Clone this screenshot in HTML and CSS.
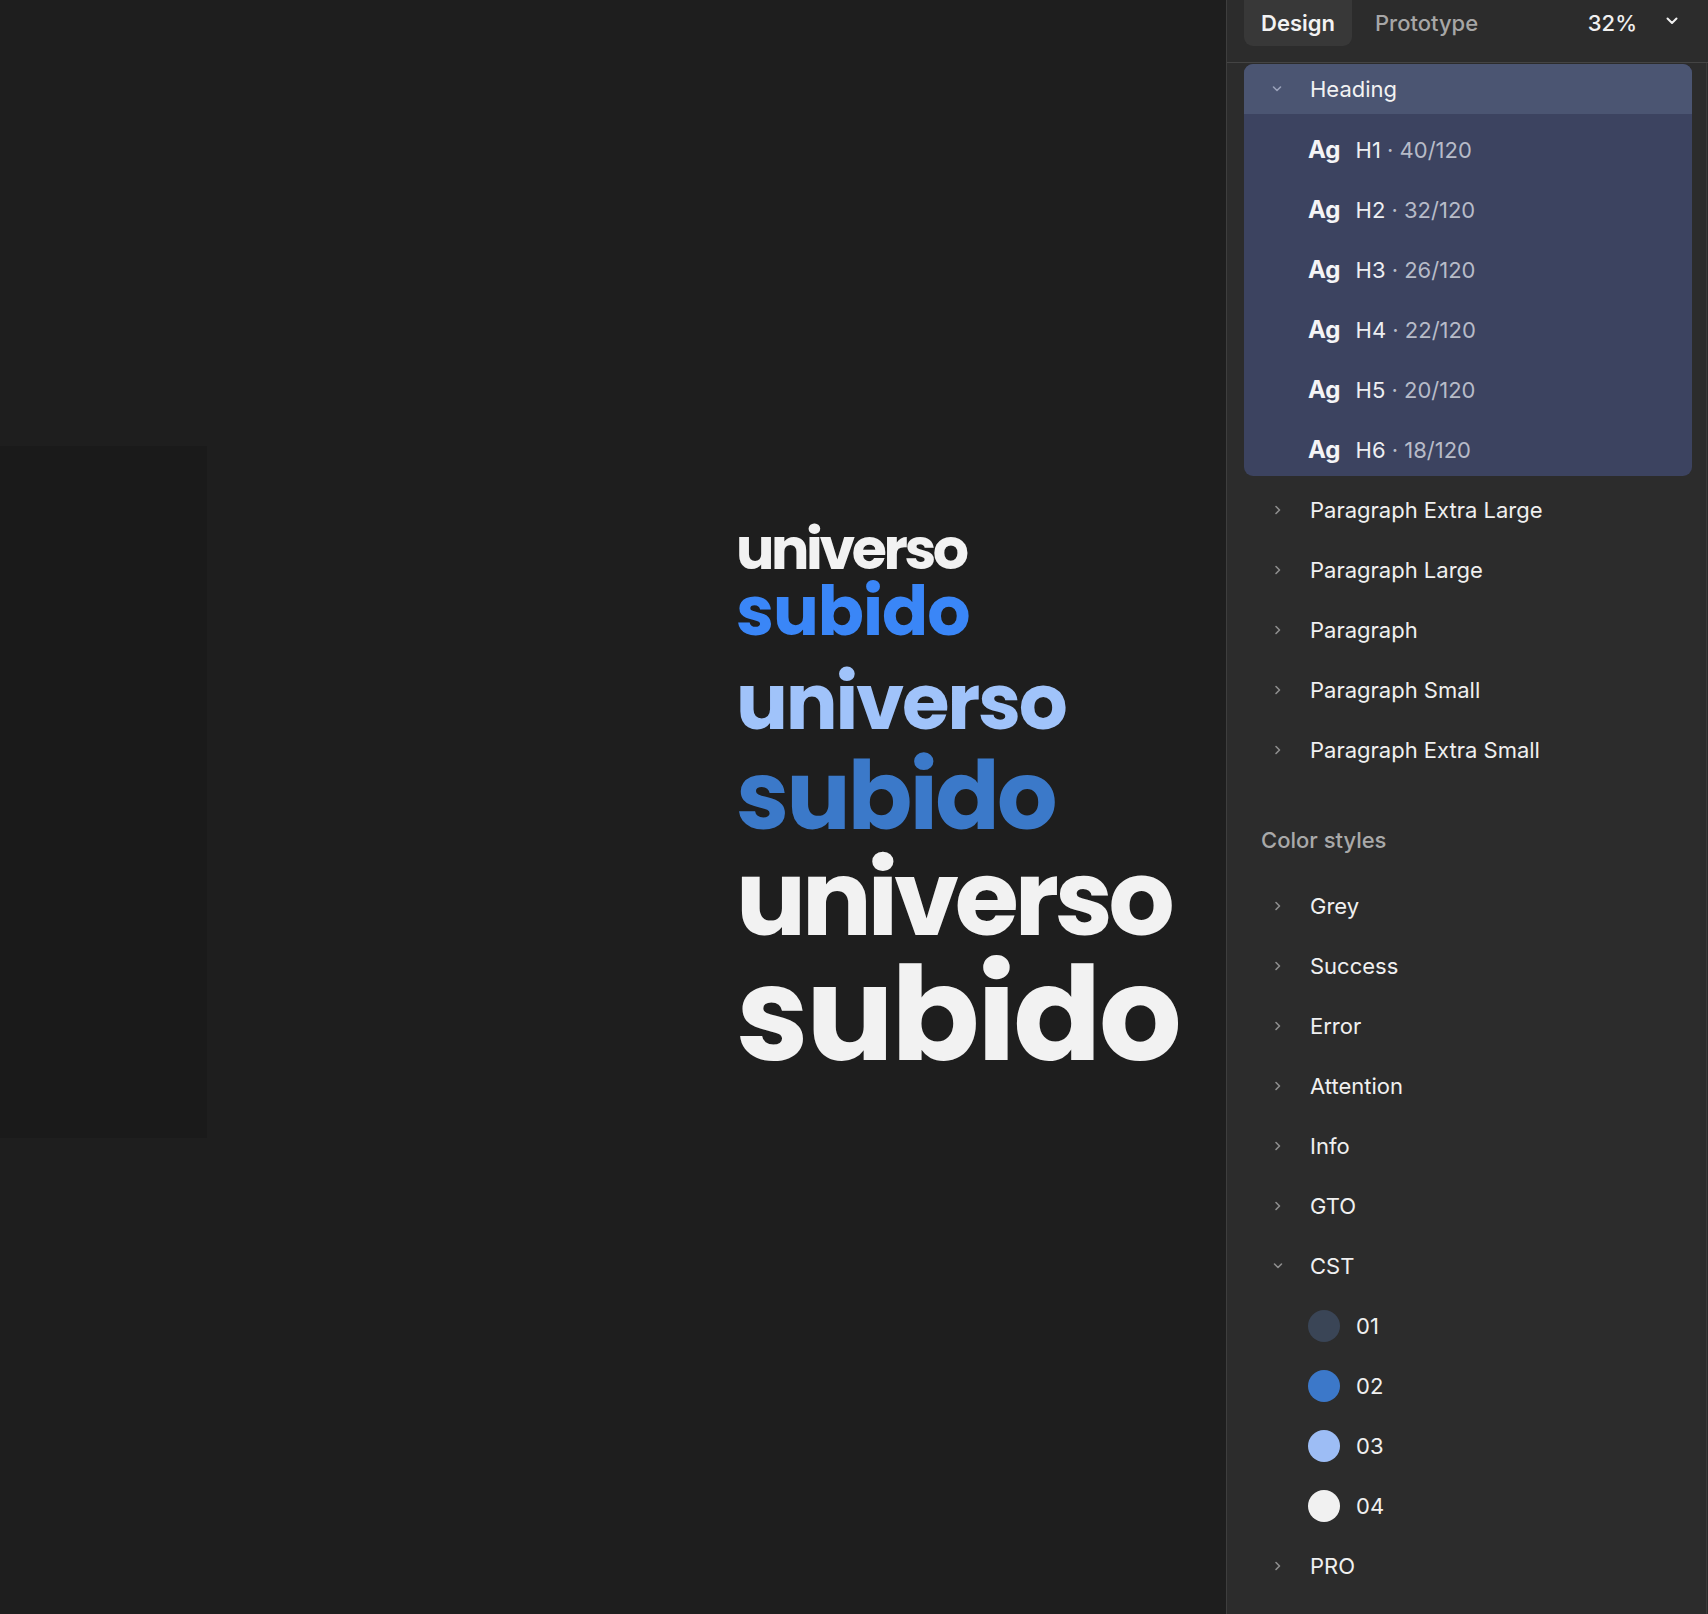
FILE: index.html
```html
<!DOCTYPE html>
<html lang="en">
<head>
<meta charset="utf-8">
<title>Design panel</title>
<link rel="stylesheet" href="styles.css">
</head>
<body>
<div class="app">
  <main class="canvas">
    <div class="frame"></div>
    <div class="specimen">
      <div class="w w1 c-white">universo</div>
      <div class="w w2 c-blue">subido</div>
      <div class="w w3 c-light">universo</div>
      <div class="w w4 c-mid">subido</div>
      <div class="w w5 c-white">universo</div>
      <div class="w w6 c-white">subido</div>
    </div>
  </main>
  <aside class="panel">
    <div class="tabs">
      <span class="tab active">Design</span>
      <span class="tab">Prototype</span>
      <span class="spacer"></span>
      <span class="zoom">32%</span>
      <svg class="zoom-chev" width="14" height="10" viewBox="0 0 14 10"><path d="M2.5 2.5 L7 7 L11.5 2.5" fill="none" stroke="#f0f0f0" stroke-width="2" stroke-linecap="round" stroke-linejoin="round"/></svg>
    </div>
    <div class="body">
      <div class="group">
        <div class="group-head">
          <svg class="chev-down" width="10" height="10" viewBox="0 0 10 10"><path d="M1.5 3 L5 6.5 L8.5 3" fill="none" stroke="currentColor" stroke-width="1.6" stroke-linecap="round" stroke-linejoin="round"/></svg>
          <span>Heading</span>
        </div>
        <div class="trow"><span class="ag">Ag</span><span class="tname">H1</span><span class="tmeta">&nbsp;· 40/120</span></div>
        <div class="trow"><span class="ag">Ag</span><span class="tname">H2</span><span class="tmeta">&nbsp;· 32/120</span></div>
        <div class="trow"><span class="ag">Ag</span><span class="tname">H3</span><span class="tmeta">&nbsp;· 26/120</span></div>
        <div class="trow"><span class="ag">Ag</span><span class="tname">H4</span><span class="tmeta">&nbsp;· 22/120</span></div>
        <div class="trow"><span class="ag">Ag</span><span class="tname">H5</span><span class="tmeta">&nbsp;· 20/120</span></div>
        <div class="trow"><span class="ag">Ag</span><span class="tname">H6</span><span class="tmeta">&nbsp;· 18/120</span></div>
      </div>

      <div class="list first">
        <div class="row"><svg class="chev" width="10" height="10" viewBox="0 0 10 10"><path d="M3 1.5 L6.5 5 L3 8.5" fill="none" stroke="currentColor" stroke-width="1.6" stroke-linecap="round" stroke-linejoin="round"/></svg><span>Paragraph Extra Large</span></div>
        <div class="row"><svg class="chev" width="10" height="10" viewBox="0 0 10 10"><path d="M3 1.5 L6.5 5 L3 8.5" fill="none" stroke="currentColor" stroke-width="1.6" stroke-linecap="round" stroke-linejoin="round"/></svg><span>Paragraph Large</span></div>
        <div class="row"><svg class="chev" width="10" height="10" viewBox="0 0 10 10"><path d="M3 1.5 L6.5 5 L3 8.5" fill="none" stroke="currentColor" stroke-width="1.6" stroke-linecap="round" stroke-linejoin="round"/></svg><span>Paragraph</span></div>
        <div class="row"><svg class="chev" width="10" height="10" viewBox="0 0 10 10"><path d="M3 1.5 L6.5 5 L3 8.5" fill="none" stroke="currentColor" stroke-width="1.6" stroke-linecap="round" stroke-linejoin="round"/></svg><span>Paragraph Small</span></div>
        <div class="row"><svg class="chev" width="10" height="10" viewBox="0 0 10 10"><path d="M3 1.5 L6.5 5 L3 8.5" fill="none" stroke="currentColor" stroke-width="1.6" stroke-linecap="round" stroke-linejoin="round"/></svg><span>Paragraph Extra Small</span></div>
      </div>

      <div class="section-title">Color styles</div>

      <div class="list">
        <div class="row"><svg class="chev" width="10" height="10" viewBox="0 0 10 10"><path d="M3 1.5 L6.5 5 L3 8.5" fill="none" stroke="currentColor" stroke-width="1.6" stroke-linecap="round" stroke-linejoin="round"/></svg><span>Grey</span></div>
        <div class="row"><svg class="chev" width="10" height="10" viewBox="0 0 10 10"><path d="M3 1.5 L6.5 5 L3 8.5" fill="none" stroke="currentColor" stroke-width="1.6" stroke-linecap="round" stroke-linejoin="round"/></svg><span>Success</span></div>
        <div class="row"><svg class="chev" width="10" height="10" viewBox="0 0 10 10"><path d="M3 1.5 L6.5 5 L3 8.5" fill="none" stroke="currentColor" stroke-width="1.6" stroke-linecap="round" stroke-linejoin="round"/></svg><span>Error</span></div>
        <div class="row"><svg class="chev" width="10" height="10" viewBox="0 0 10 10"><path d="M3 1.5 L6.5 5 L3 8.5" fill="none" stroke="currentColor" stroke-width="1.6" stroke-linecap="round" stroke-linejoin="round"/></svg><span>Attention</span></div>
        <div class="row"><svg class="chev" width="10" height="10" viewBox="0 0 10 10"><path d="M3 1.5 L6.5 5 L3 8.5" fill="none" stroke="currentColor" stroke-width="1.6" stroke-linecap="round" stroke-linejoin="round"/></svg><span>Info</span></div>
        <div class="row"><svg class="chev" width="10" height="10" viewBox="0 0 10 10"><path d="M3 1.5 L6.5 5 L3 8.5" fill="none" stroke="currentColor" stroke-width="1.6" stroke-linecap="round" stroke-linejoin="round"/></svg><span>GTO</span></div>
        <div class="row"><svg class="chev" width="10" height="10" viewBox="0 0 10 10"><path d="M1.5 3 L5 6.5 L8.5 3" fill="none" stroke="currentColor" stroke-width="1.6" stroke-linecap="round" stroke-linejoin="round"/></svg><span>CST</span></div>
        <div class="row swatch-row"><span class="swatch s01"></span><span>01</span></div>
        <div class="row swatch-row"><span class="swatch s02"></span><span>02</span></div>
        <div class="row swatch-row"><span class="swatch s03"></span><span>03</span></div>
        <div class="row swatch-row"><span class="swatch s04"></span><span>04</span></div>
        <div class="row"><svg class="chev" width="10" height="10" viewBox="0 0 10 10"><path d="M3 1.5 L6.5 5 L3 8.5" fill="none" stroke="currentColor" stroke-width="1.6" stroke-linecap="round" stroke-linejoin="round"/></svg><span>PRO</span></div>
      </div>
    </div>
  </aside>
</div>
</body>
</html>
```

FILE: styles.css
```css
* { box-sizing: border-box; }
html, body { margin: 0; padding: 0; }
body {
  background: #1e1e1e;
  font-family: Inter, "Noto Sans", sans-serif;
  color: #f0f0f0;
  width: 1708px;
  height: 1614px;
  overflow: hidden;
}
.app {
  display: flex;
  width: 1708px;
  height: 1614px;
}

/* ---------- canvas ---------- */
.canvas {
  width: 1226px;
  flex: none;
  background: #1e1e1e;
  display: flex;
  align-items: flex-start;
}
.frame {
  width: 207px;
  height: 692px;
  margin-top: 446px;
  background: #1a1a1a;
  flex: none;
}
.specimen {
  margin-left: 529px;
  margin-top: 521px;
  font-family: "Poppins", Inter, sans-serif;
  font-weight: 700;
}
.w { white-space: nowrap; }
.w1 { font-size: 57px; line-height: 57px; letter-spacing: -3.4px; }
.w2 { font-size: 68px; line-height: 68px; letter-spacing: -1px; }
.w3 { font-size: 77px; line-height: 77px; margin-top: 18px; letter-spacing: -2.2px; }
.w4 { font-size: 95px; line-height: 95px; margin-top: 7px; letter-spacing: -2.6px; }
.w5 { font-size: 104px; line-height: 104px; margin-top: 4px; letter-spacing: -4.3px; }
.w6 { font-size: 130px; line-height: 130px; margin-top: -1px; letter-spacing: -2.4px; }
.c-white { color: #f2f2f2; }
.c-blue { color: #3a86f7; }
.c-light { color: #a0c3fa; }
.c-mid { color: #3b79c9; }

/* ---------- panel ---------- */
.panel {
  flex: 1;
  background: #2c2c2c;
  border-left: 1px solid #3e3e3e;
  display: flex;
  flex-direction: column;
  font-size: 22px;
}
.tabs {
  height: 63px;
  border-bottom: 1px solid #444444;
  display: flex;
  align-items: flex-start;
  padding: 0 29px 0 17px;
  flex: none;
}
.tab {
  height: 46px;
  line-height: 46px;
  padding: 0 17px;
  color: #a6a6a6;
  font-weight: 500;
  border-radius: 0 0 9px 9px;
}
.tab + .tab { margin-left: 6px; }
.tab.active {
  background: #383838;
  color: #f2f2f2;
  font-weight: 600;
}
.spacer { flex: 1; }
.zoom {
  line-height: 46px;
  font-weight: 500;
  color: #f0f0f0;
}
.zoom-chev {
  margin-left: 28px;
  margin-top: 16px;
}

.body {
  flex: 1;
  border-right: 1px solid #3a3a3a;
  margin-right: 1px;
  padding-top: 1px;
}
.group {
  margin: 0 14px 0 17px;
  background: #3c4360;
  border-radius: 9px;
  overflow: hidden;
  padding-bottom: 2px;
}
.group-head {
  height: 50px;
  line-height: 50px;
  background: #4b5572;
  display: flex;
  align-items: center;
  padding-left: 28px;
  color: #f2f2f2;
}
.chev-down { color: #9aa2ba; margin-right: 28px; flex: none; }
.trow {
  height: 60px;
  padding-top: 11px;
  line-height: 50px;
  padding-left: 64px;
  display: flex;
  align-items: baseline;
}
.ag {
  font-size: 24px;
  font-weight: 700;
  color: #f4f4f6;
  margin-right: 15px;
}
.tname { color: #eeeff2; }
.tmeta { color: #b7bbc8; }

.list.first { margin-top: 4px; }
.row {
  height: 60px;
  display: flex;
  align-items: center;
  padding-left: 46px;
  color: #f0f0f0;
}
.chev { color: #8e8e8e; margin-right: 27px; flex: none; }
.section-title {
  margin-top: 30px;
  margin-bottom: 6px;
  height: 60px;
  line-height: 60px;
  padding-left: 34px;
  color: #a9a9a9;
  font-weight: 500;
}
.swatch-row { padding-left: 81px; }
.swatch {
  width: 32px;
  height: 32px;
  border-radius: 50%;
  margin-right: 16px;
  flex: none;
}
.s01 { background: #3a4556; }
.s02 { background: #3c78c9; }
.s03 { background: #9dbdf5; }
.s04 { background: #f1f1f1; }
```
